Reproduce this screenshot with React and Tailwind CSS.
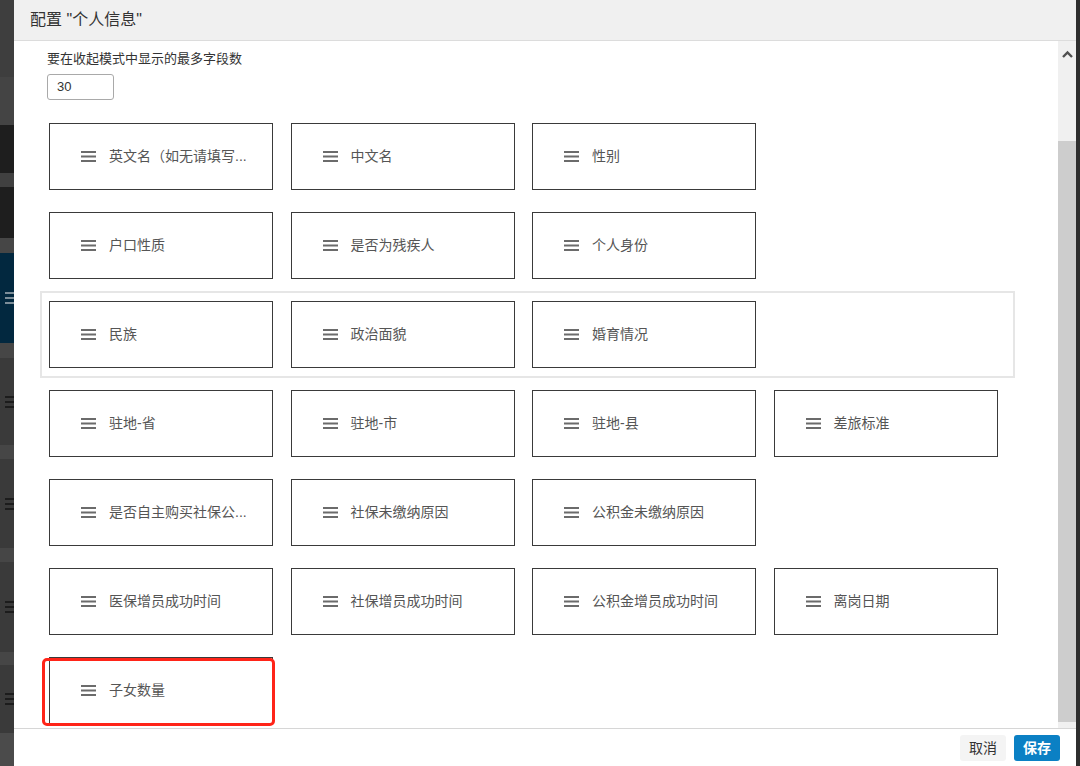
import React from "react";

const rows = [
  ["英文名（如无请填写...", "中文名", "性别"],
  ["户口性质", "是否为残疾人", "个人身份"],
  ["民族", "政治面貌", "婚育情况"],
  ["驻地-省", "驻地-市", "驻地-县", "差旅标准"],
  ["是否自主购买社保公...", "社保未缴纳原因", "公积金未缴纳原因"],
  ["医保增员成功时间", "社保增员成功时间", "公积金增员成功时间", "离岗日期"],
  ["子女数量"],
];

// dark page strip peeking out on the left of the modal
const strip = [
  { h: "h-[77px]", bg: "bg-[#3e3e3e]" },
  { h: "h-[48px]", bg: "bg-[#444444]" },
  { h: "h-[48px]", bg: "bg-[#1e1e1e]" },
  { h: "h-[14px]", bg: "bg-[#404040]" },
  { h: "h-[51px]", bg: "bg-[#1e1e1e]" },
  { h: "h-[15px]", bg: "bg-[#464646]" },
  { h: "h-[90px]", bg: "bg-[#02283f]", lines: "bg-[#7d8e99]" },
  { h: "h-[15px]", bg: "bg-[#464646]" },
  { h: "h-[87px]", bg: "bg-[#3a3a3a]", lines: "bg-[#1c1c1c]" },
  { h: "h-[14px]", bg: "bg-[#464646]" },
  { h: "h-[89px]", bg: "bg-[#3a3a3a]", lines: "bg-[#1c1c1c]" },
  { h: "h-[14px]", bg: "bg-[#464646]" },
  { h: "h-[90px]", bg: "bg-[#3a3a3a]", lines: "bg-[#1c1c1c]" },
  { h: "h-[13px]", bg: "bg-[#464646]" },
  { h: "h-[68px]", bg: "bg-[#3a3a3a]", lines: "bg-[#1c1c1c]" },
  { h: "h-[33px]", bg: "bg-[#4b4b4b]" },
];

const DragIcon = () => (
  <svg width="15" height="11" viewBox="0 0 15 11" className="shrink-0">
    <rect x="0" y="0" width="15" height="2" fill="#6b6b6b" />
    <rect x="0" y="4.5" width="15" height="2" fill="#6b6b6b" />
    <rect x="0" y="9" width="15" height="2" fill="#6b6b6b" />
  </svg>
);

const FieldCard = ({ label, marked }) => (
  <div className="relative w-[224px] h-[67px] shrink-0 border border-[#3a3a3a] bg-white flex items-center pl-[31px]">
    <DragIcon />
    <span className="ml-[13px] text-[14px] text-[#555] whitespace-nowrap">
      {label}
    </span>
    {marked && (
      <div className="absolute left-[-8px] right-[-3px] top-[0px] h-[68px] border-[3px] border-[#ff2418] rounded-[5px]" />
    )}
  </div>
);

export default function App() {
  return (
    <div className="w-[1080px] h-[766px] flex overflow-hidden bg-[#333] font-[Liberation_Sans,Noto_Sans_CJK_SC,sans-serif]">
      {/* page behind the modal */}
      <div className="w-[14px] shrink-0 flex flex-col">
        {strip.map((s, i) => (
          <div key={i} className={`${s.h} ${s.bg} flex items-center justify-end`}>
            {s.lines && (
              <div className="w-[9px] flex flex-col gap-[3px]">
                <div className={`h-[2px] ${s.lines}`} />
                <div className={`h-[2px] ${s.lines}`} />
                <div className={`h-[2px] ${s.lines}`} />
              </div>
            )}
          </div>
        ))}
      </div>

      {/* modal */}
      <div className="w-[1062px] shrink-0 h-full flex flex-col bg-white">
        <div className="h-[41px] shrink-0 bg-[#f0f0f0] border-b border-[#dcdcdc] flex items-center pl-[16px]">
          <span className="text-[16px] text-[#333]">配置 "个人信息"</span>
        </div>

        <div className="flex-1 flex min-h-0">
          <div className="flex-1 overflow-hidden pl-[26px] pt-[9px]">
            <div className="pl-[7px]">
              <div className="text-[13px] leading-[18px] text-[#333]">
                要在收起模式中显示的最多字段数
              </div>
              <div className="mt-[6px] w-[67px] h-[26px] border border-[#a9a9a9] rounded-[3px] flex items-center pl-[9px] text-[13px] text-[#333]">
                30
              </div>
            </div>

            <div className="mt-[13px] flex flex-col gap-[2px]">
              {rows.map((row, ri) => (
                <div
                  key={ri}
                  className={`w-[975px] border-2 px-[7px] py-[8px] flex gap-[17.5px] ${
                    ri === 2 ? "border-[#e6e6e6]" : "border-transparent"
                  }`}
                >
                  {row.map((label) => (
                    <FieldCard key={label} label={label} marked={ri === 6} />
                  ))}
                </div>
              ))}
            </div>
          </div>

          {/* scrollbar */}
          <div className="w-[18px] shrink-0 bg-[#f0f0f0] flex flex-col">
            <div className="h-[26px] flex items-center justify-center">
              <svg width="11" height="8" viewBox="0 0 11 8">
                <path d="M1 7 L5.5 2.5 L10 7" stroke="#505050" strokeWidth="2.4" fill="none" />
              </svg>
            </div>
            <div className="h-[74px]" />
            <div className="h-[581px] bg-[#cdcdcd]" />
          </div>
        </div>

        <div className="h-[38px] shrink-0 border-t border-[#d6d6d6] flex items-center justify-end gap-[8px] pr-[16px] pt-[1px]">
          <button className="h-[26px] px-[9px] rounded-[3px] bg-[#f4f4f4] text-[14px] text-[#333]">
            取消
          </button>
          <button className="h-[26px] px-[9px] rounded-[3px] bg-[#0b80c4] text-[14px] font-bold text-white">
            保存
          </button>
        </div>
      </div>

      <div className="flex-1 bg-[#2e2e2e]" />
    </div>
  );
}
